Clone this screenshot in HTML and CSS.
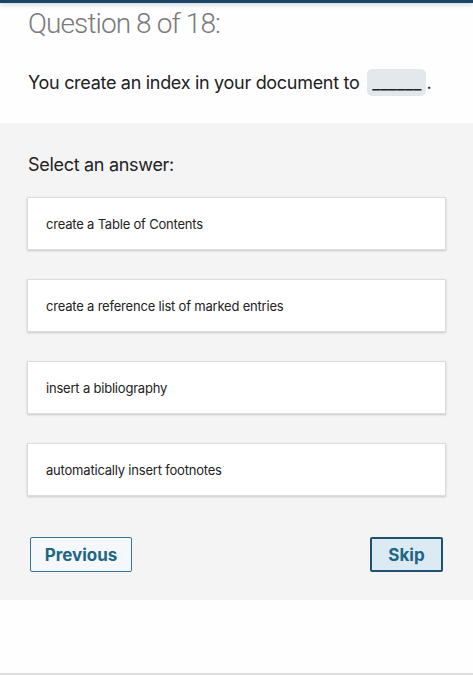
FILE: index.html
```html
<!DOCTYPE html>
<html>
<head>
<meta charset="utf-8">
<link rel="stylesheet" href="styles.css">
</head>
<body>
<div class="topbar"></div>
<header class="qhead">
  <h1 class="qtitle">Question 8 of 18:</h1>
  <p class="qtext">You create an index in your document to <span class="blank">______</span>.</p>
</header>
<section class="answers">
  <h2 class="prompt">Select an answer:</h2>
  <ul class="options">
    <li class="option">create a Table of Contents</li>
    <li class="option">create a reference list of marked entries</li>
    <li class="option">insert a bibliography</li>
    <li class="option">automatically insert footnotes</li>
  </ul>
  <div class="nav">
    <button class="btn btn-prev">Previous</button>
    <button class="btn btn-skip">Skip</button>
  </div>
</section>
<div class="footer"></div>
</body>
</html>
```
FILE: styles.css
```css
* { box-sizing: border-box; }
html, body { margin: 0; padding: 0; }
body {
  width: 473px;
  height: 675px;
  background: #fefefe;
  font-family: "Inter", "Liberation Sans", sans-serif;
  color: #222;
  display: flex;
  flex-direction: column;
}
.topbar {
  height: 3px;
  background: #1c4466;
  box-shadow: 0 1px 5px rgba(30, 80, 130, 0.35);
}
.qhead {
  padding: 3px 28px 0 28px;
  height: 120px;
}
.qtitle {
  margin: 0;
  font-family: "Roboto", "Liberation Sans", sans-serif;
  font-weight: 300;
  font-size: 28px;
  line-height: 36px;
  color: #7a7a7a;
  letter-spacing: -0.9px;
}
.qtext {
  margin: 27px 0 0 0;
  font-size: 18px;
  line-height: 28px;
  color: #222;
  letter-spacing: -0.3px;
}
.blank {
  display: inline-block;
  background: #e3e8ec;
  border-radius: 5px;
  padding: 0 5px;
  margin-left: 3px;
  line-height: 27px;
  letter-spacing: 0;
}
.answers {
  background: #f4f4f4;
  padding: 28px 27px 28px 27px;
  height: 477px;
}
.prompt {
  margin: 0 0 18px 1px;
  font-weight: 400;
  font-size: 18px;
  line-height: 28px;
  color: #222;
  letter-spacing: -0.3px;
}
.options {
  list-style: none;
  margin: 0;
  padding: 0;
  display: flex;
  flex-direction: column;
  gap: 29px;
}
.option {
  background: #fff;
  border: 1px solid #dcdcdc;
  box-shadow: 0 1px 2px rgba(0, 0, 0, 0.18);
  height: 53px;
  display: flex;
  align-items: center;
  padding-left: 18px;
  font-size: 13px;
  color: #222;
  letter-spacing: -0.2px;
}
.nav {
  margin-top: 41px;
  display: flex;
  justify-content: space-between;
  padding: 0 3px;
}
.btn {
  height: 35px;
  font-family: "Inter", "Liberation Sans", sans-serif;
  font-weight: 700;
  font-size: 17px;
  color: #1f6685;
  border-radius: 2px;
  cursor: pointer;
}
.btn-prev {
  width: 102px;
  background: #f4f8fb;
  border: 1px solid #3a7590;
}
.btn-skip {
  width: 73px;
  background: #dceaf3;
  border: 2px solid #1f5270;
}
.footer {
  flex: 1;
  border-bottom: 2px solid #dedede;
}
```
